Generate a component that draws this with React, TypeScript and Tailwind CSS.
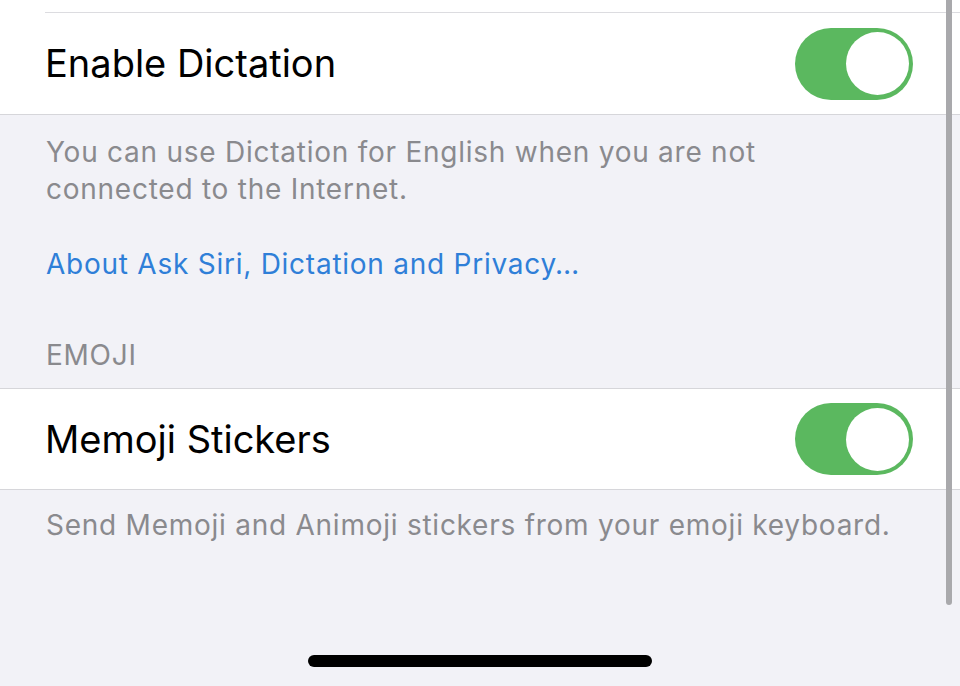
export default function App() {
  const font = { fontFamily: "Inter, 'Liberation Sans', sans-serif" };
  return (
    <div
      className="relative h-[686px] w-[960px] overflow-hidden bg-[#f2f2f7]"
      style={font}
    >
      {/* first group */}
      <div className="border-b border-[#d6d6da] bg-white">
        <div className="ml-[45px] h-[13px] border-b border-[#dcdce0]" />
        <Row label="Enable Dictation" height="h-[101px]" />
      </div>

      <div className="pl-[46px] pt-[19px] text-[28px] leading-[37px] tracking-[0.75px] text-[#8a8a8e]">
        <p>
          You can use Dictation for English when you are not
          <br />
          connected to the Internet.
        </p>
        <p className="mt-[38px] text-[#2f7fd8]">About Ask Siri, Dictation and Privacy…</p>
        <p className="mt-[54px] pb-[14px]">EMOJI</p>
      </div>

      {/* emoji group */}
      <div className="border-y border-[#d6d6da] bg-white">
        <Row label="Memoji Stickers" height="h-[100px]" />
      </div>

      <div className="pl-[46px] pt-[17px] text-[28px] leading-[37px] tracking-[0.75px] text-[#8a8a8e]">
        <p>Send Memoji and Animoji stickers from your emoji keyboard.</p>
      </div>

      {/* scroll indicator */}
      <div className="absolute left-[946px] top-[-10px] h-[615px] w-[6px] rounded-full bg-[#a9a9ac]" />

      {/* home indicator */}
      <div className="absolute left-[308px] top-[655px] h-[12px] w-[344px] rounded-full bg-black" />
    </div>
  );
}

function Row({ label, height }: { label: string; height: string }) {
  return (
    <div className={`flex items-center justify-between pl-[45px] pr-[47px] ${height}`}>
      <span className="text-[38px] text-black">{label}</span>
      <Toggle />
    </div>
  );
}

function Toggle() {
  return (
    <div className="flex h-[72px] w-[118px] items-center justify-end rounded-full bg-[#5bb85f] pr-[4px]">
      <div className="h-[63px] w-[63px] rounded-full bg-white" />
    </div>
  );
}
